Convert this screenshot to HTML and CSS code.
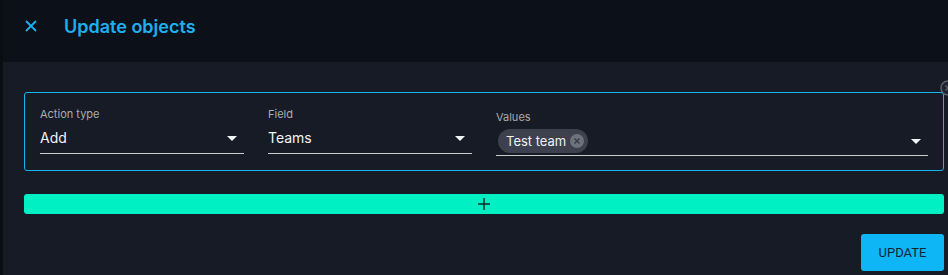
FILE: index.html
```html
<!DOCTYPE html>
<html>
<head>
<meta charset="utf-8">
<link rel="stylesheet" href="styles.css">
</head>
<body>
<div class="page">
  <div class="strip"></div>
  <div class="main">
    <header class="header">
      <svg class="close" width="12" height="12" viewBox="0 0 12 12"><path d="M1 1L11 11M11 1L1 11" stroke="#1cb0ef" stroke-width="1.8" fill="none"/></svg>
      <h1 class="title">Update objects</h1>
    </header>
    <section class="content">
      <div class="card">
        <div class="field f-small">
          <div class="label">Action type</div>
          <div class="input"><span class="val">Add</span><span class="caret"></span></div>
        </div>
        <div class="field f-small">
          <div class="label">Field</div>
          <div class="input"><span class="val">Teams</span><span class="caret"></span></div>
        </div>
        <div class="field f-values">
          <div class="label">Values</div>
          <div class="input">
            <span class="chip">Test team
              <svg class="chip-x" width="14" height="14" viewBox="0 0 14 14"><circle cx="7" cy="7" r="7" fill="#6e727d"/><path d="M4.5 4.5L9.5 9.5M9.5 4.5L4.5 9.5" stroke="#3a3e49" stroke-width="1.5"/></svg>
            </span>
            <span class="caret"></span>
          </div>
        </div>
        <svg class="row-del" width="16" height="16" viewBox="0 0 16 16"><circle cx="8" cy="8" r="7" fill="#1d2230" stroke="#5b606b" stroke-width="1.5"/><path d="M5.5 5.5L10.5 10.5M10.5 5.5L5.5 10.5" stroke="#5b606b" stroke-width="1.5"/></svg>
      </div>
      <button class="add">
        <svg width="12" height="12" viewBox="0 0 12 12"><path d="M6 0V12M0 6H12" stroke="#0f2b2a" stroke-width="1.5"/></svg>
      </button>
      <div class="actions">
        <button class="update">UPDATE</button>
      </div>
    </section>
  </div>
</div>
</body>
</html>
```
FILE: styles.css
```css
html, body {
  margin: 0;
  padding: 0;
  background: #171b26;
  font-family: Inter, "Noto Sans", sans-serif;
  overflow: hidden;
}
.page {
  display: flex;
  height: 275px;
}
.strip {
  width: 3px;
  background: #0a0d14;
  flex: none;
}
.main {
  flex: 1;
  display: flex;
  flex-direction: column;
}
.header {
  height: 62px;
  background: #0c1019;
  display: flex;
  align-items: center;
  padding: 0 0 8px 22px;
  box-sizing: border-box;
}
.close {
  margin-top: -2px;
}
.title {
  margin: 0 0 0 27px;
  font-size: 18px;
  font-weight: 600;
  color: #1cb0ef;
  margin-top: -2px;
  letter-spacing: 0;
}
.content {
  padding: 30px 4px 0 21px;
  display: flex;
  flex-direction: column;
}
.card {
  position: relative;
  border: 1px solid #16b5f0;
  border-radius: 3px;
  padding: 14px 15px 14px 15px;
  display: flex;
  gap: 24px;
  align-items: flex-start;
}
.field {
  display: flex;
  flex-direction: column;
}
.f-small {
  width: 204px;
}
.f-values {
  flex: 1;
  padding-top: 3px;
}
.label {
  font-size: 11px;
  line-height: 14px;
  color: #a9acb3;
}
.input {
  display: flex;
  align-items: center;
  justify-content: space-between;
  border-bottom: 1px solid #c9cbcf;
}
.f-small .input {
  margin-top: 7px;
  height: 20px;
  padding-bottom: 5px;
}
.f-values .input {
  margin-top: 5px;
  height: 24px;
  padding-bottom: 2px;
}
.val {
  font-size: 14px;
  line-height: 20px;
  color: #f2f3f5;
}
.caret {
  width: 0;
  height: 0;
  border-left: 5px solid transparent;
  border-right: 5px solid transparent;
  border-top: 5px solid #f2f3f5;
  margin-right: 7px;
}
.chip {
  margin-left: 2px;
  height: 24px;
  border-radius: 12px;
  background: #3c414d;
  color: #eef0f2;
  font-size: 13px;
  display: inline-flex;
  align-items: center;
  padding: 0 4px 0 8px;
  gap: 4px;
}
.row-del {
  position: absolute;
  right: -13px;
  top: -13px;
}
.add {
  margin-top: 23px;
  height: 20px;
  border: none;
  border-radius: 3px;
  background: #00f0c3;
  display: flex;
  align-items: center;
  justify-content: center;
  padding: 0;
}
.actions {
  display: flex;
  justify-content: flex-end;
  margin-top: 20px;
}
.update {
  width: 83px;
  height: 37px;
  border: none;
  border-radius: 3px;
  background: #0fb6f6;
  color: #0b2636;
  font-family: Roboto, sans-serif;
  font-size: 13px;
  letter-spacing: 0;
  padding: 0;
}
```
